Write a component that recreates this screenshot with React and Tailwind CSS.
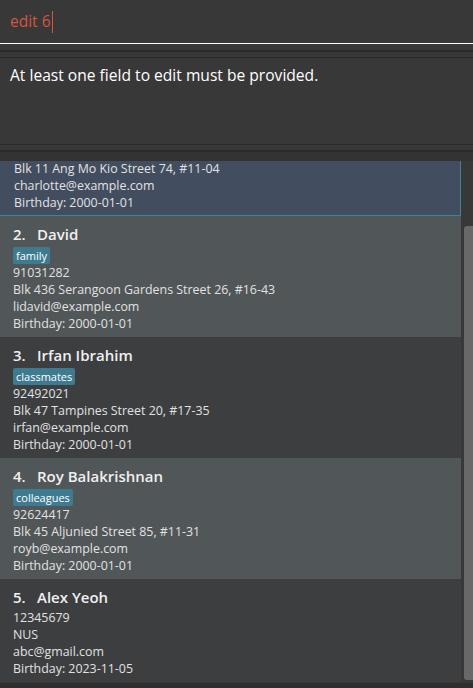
import React from "react";

const people = [
  { n: 2, name: "David", tags: ["family"], phone: "91031282", addr: "Blk 436 Serangoon Gardens Street 26, #16-43", email: "lidavid@example.com", bday: "2000-01-01" },
  { n: 3, name: "Irfan Ibrahim", tags: ["classmates"], phone: "92492021", addr: "Blk 47 Tampines Street 20, #17-35", email: "irfan@example.com", bday: "2000-01-01" },
  { n: 4, name: "Roy Balakrishnan", tags: ["colleagues"], phone: "92624417", addr: "Blk 45 Aljunied Street 85, #11-31", email: "royb@example.com", bday: "2000-01-01" },
  { n: 5, name: "Alex Yeoh", tags: [], phone: "12345679", addr: "NUS", email: "abc@gmail.com", bday: "2023-11-05" },
];

function Card({ p, idx }) {
  const bg = idx % 2 === 0 ? "bg-[#515658]" : "bg-[#3c3e40]";
  return (
    <div className={`${bg} pl-[13px] pb-[5px] pt-[8px] pr-2 shrink-0`}>
      <div className="flex items-center h-[20px] text-[15px] font-semibold text-[#f0f0f0] leading-[20px]">
        <span className="w-[24px]">{p.n}.</span>
        <span>{p.name}</span>
      </div>
      {p.tags.length > 0 ? (
        <div className="flex gap-1 mt-[3px] h-[17px]">
          {p.tags.map((t) => (
            <span key={t} className="bg-[#3e7b91] text-white text-[11px] leading-[17px] h-[17px] px-[3px] rounded-[2px]">{t}</span>
          ))}
        </div>
      ) : (
        <div className="h-[2px]" />
      )}
      <div className="text-[12.4px] leading-[17px] text-[#e2e2e2]">
        <div>{p.phone}</div>
        <div>{p.addr}</div>
        <div>{p.email}</div>
        <div>Birthday: {p.bday}</div>
      </div>
    </div>
  );
}

export default function App() {
  return (
    <div className="w-[473px] h-[688px] bg-[#383838] overflow-hidden flex flex-col" style={{ fontFamily: '"Open Sans", "Noto Sans", sans-serif' }}>
      <div className="h-[43px] flex items-center pl-[10px] text-[15.5px] text-[#d4553d] shrink-0">
        <span>edit 6</span>
        <span className="w-px h-[22px] bg-[#d4553d] ml-[1px]" />
      </div>
      <div className="h-px bg-white shrink-0" />
      <div className="h-[6px] shrink-0" />
      <div className="h-[2px] bg-[#2a2a2a] shrink-0" />
      <div className="h-[5px] shrink-0" />
      <div className="h-px bg-[#2a2a2a] shrink-0" />
      <div className="h-[86px] pl-[10px] pt-[7px] text-[15.6px] text-white leading-[20px] shrink-0">
        At least one field to edit must be provided.
      </div>
      <div className="h-px bg-[#2a2a2a] shrink-0" />
      <div className="h-[5px] shrink-0" />
      <div className="h-[2px] bg-[#2a2a2a] shrink-0" />
      <div className="h-[9px] bg-[#333333] shrink-0" />
      <div className="flex h-[522px] overflow-hidden shrink-0">
        <div className="w-[461px] flex flex-col overflow-hidden">
          <div className="bg-[#424d5f] border-r border-b border-[#3e8499] h-[55px] pl-[14px] shrink-0 overflow-hidden">
            <div className="text-[12.4px] leading-[17px] text-[#e2e2e2] mt-[-1px]">
              <div>Blk 11 Ang Mo Kio Street 74, #11-04</div>
              <div>charlotte@example.com</div>
              <div>Birthday: 2000-01-01</div>
            </div>
          </div>
          {people.map((p, i) => (
            <Card key={p.n} p={p} idx={i} />
          ))}
        </div>
        <div className="flex-1 bg-[#383838] relative">
          <div className="absolute left-[3px] right-0 top-[65px] h-[454px] bg-[#686868] rounded-l-[3px]" />
        </div>
      </div>
      <div className="flex-1 bg-[#2f2f2f]" />
    </div>
  );
}
